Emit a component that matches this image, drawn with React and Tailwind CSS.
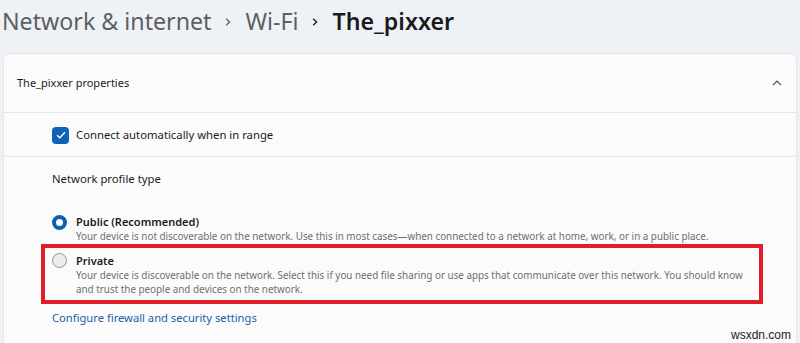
export default function App() {
  const font = { fontFamily: '"Noto Sans", "Open Sans", sans-serif' }

  return (
    <div className="relative h-[343px] w-[800px] overflow-hidden bg-[#eef2f6]" style={font}>
      {/* breadcrumb */}
      <div className="flex h-[53px] items-start pl-[2px] pt-[5px] text-[23.2px] leading-[32px]">
        <span className="text-[#5c5f63]">Network &amp; internet</span>
        <svg className="mx-[14px] mt-[13px] h-[8px] w-[6px]" viewBox="0 0 6 8" fill="none">
          <path d="M1.2 0.8 L4.6 4 L1.2 7.2" stroke="#5c5f63" strokeWidth="1.3" />
        </svg>
        <span className="text-[#5c5f63]">Wi-Fi</span>
        <svg className="mx-[14px] mt-[13px] h-[8px] w-[6px]" viewBox="0 0 6 8" fill="none">
          <path d="M1.2 0.8 L4.6 4 L1.2 7.2" stroke="#1b1b1b" strokeWidth="1.3" />
        </svg>
        <span className="font-semibold text-[#1b1b1b]">The_pixxer</span>
      </div>

      {/* card */}
      <div className="mx-[3px] rounded-t-[5px] border border-[#e3e5e8] bg-[#fbfbfb]">
        <div className="flex h-[59px] items-center justify-between border-b border-[#e6e7e9] pl-[13px] pr-[14px]">
          <span className="text-[11px] text-[#1b1b1b]">The_pixxer properties</span>
          <svg className="h-[6px] w-[10px]" viewBox="0 0 10 6" fill="none">
            <path d="M1 5 L5 1 L9 5" stroke="#555" strokeWidth="1.2" />
          </svg>
        </div>

        <div className="flex h-[44px] items-center gap-[7px] border-b border-[#e6e7e9] pl-[48px] pt-[1px]">
          <span className="flex h-[17px] w-[17px] items-center justify-center rounded-[4px] bg-[#0f62b6]">
            <svg className="h-[8px] w-[10px]" viewBox="0 0 10 8" fill="none">
              <path d="M1 4.2 L3.8 6.8 L9 1.2" stroke="#fff" strokeWidth="1.3" />
            </svg>
          </span>
          <span className="text-[11.3px] text-[#1b1b1b]">Connect automatically when in range</span>
        </div>

        <div className="h-[200px] pl-[48px] pt-[14px]">
          <div className="text-[11.3px] leading-[16px] text-[#1b1b1b]">Network profile type</div>

          <div className="mt-[26.5px] flex gap-[9px]">
            <span className="mt-[1px] flex h-[15px] w-[15px] shrink-0 items-center justify-center rounded-full bg-[#0f5fb0]">
              <span className="h-[7px] w-[7px] rounded-full bg-white" />
            </span>
            <div className="w-[680px]">
              <div className="text-[11px] font-semibold leading-[15px] text-[#1b1b1b]">Public (Recommended)</div>
              <div className="text-[9.85px] leading-[15px] text-[#6b6e72]">
                Your device is not discoverable on the network. Use this in most cases—when connected to a network at home, work, or in a public place.
              </div>
            </div>
          </div>

          <div className="mt-[9px] flex gap-[9px]">
            <span className="h-[15px] w-[15px] shrink-0 rounded-full border border-[#8f9296] bg-[#ececec]" />
            <div className="w-[680px]">
              <div className="text-[11px] font-semibold leading-[15px] text-[#1b1b1b]">Private</div>
              <div className="text-[9.85px] leading-[14px] text-[#6b6e72]">
                Your device is discoverable on the network. Select this if you need file sharing or use apps that communicate over this network. You should know and trust the people and devices on the network.
              </div>
            </div>
          </div>

          <div className="mt-[14.5px] text-[11.2px] leading-[16px] text-[#1c5ea8]">Configure firewall and security settings</div>
        </div>
      </div>

      {/* annotation */}
      <div className="absolute left-[41px] top-[244px] h-[60px] w-[722px] border-[4px] border-[#e01f2b]" />
      <div className="absolute right-[9px] top-[328px] text-[12px] leading-[14px] text-[#222]" style={{ fontFamily: '"Liberation Sans", sans-serif' }}>
        wsxdn.com
      </div>
    </div>
  )
}
